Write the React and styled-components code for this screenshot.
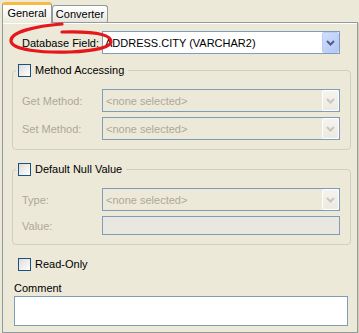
import React from 'react';
import styled, { createGlobalStyle } from 'styled-components';

const GlobalStyle = createGlobalStyle`
  html, body {
    margin: 0;
    padding: 0;
    background: #ece9d8;
  }
  body {
    font-family: "Liberation Sans", Arial, sans-serif;
    font-size: 11px;
    color: #000;
  }
`;

const Window = styled.div`
  position: relative;
  width: 359px;
  height: 333px;
  padding: 0 0 0 2px;
  box-sizing: border-box;
  background: #ece9d8;
`;

const TabStrip = styled.div`
  display: flex;
  align-items: flex-end;
  height: 22px;
`;

const Tab = styled.div`
  position: relative;
  box-sizing: border-box;
  display: flex;
  align-items: center;
  justify-content: center;
  width: ${(p) => (p.$active ? 50 : 56)}px;
  height: ${(p) => (p.$active ? 21 : 17)}px;
  margin-bottom: ${(p) => (p.$active ? -1 : 0)}px;
  z-index: ${(p) => (p.$active ? 1 : 0)};
  border: 1px solid #919b9c;
  border-bottom: none;
  border-top: ${(p) => (p.$active ? '3px solid #f9b943' : '1px solid #919b9c')};
  border-radius: 3px 3px 0 0;
  background: ${(p) =>
    p.$active
      ? 'linear-gradient(#ffffff, #f6f5ef 60%, #ece9d8)'
      : 'linear-gradient(#ffffff, #f0efe9 70%, #e6e4da)'};
  padding-bottom: ${(p) => (p.$active ? 2 : 0)}px;
`;

const Panel = styled.div`
  box-sizing: border-box;
  width: 356px;
  height: 311px;
  border: 1px solid #919b9c;
  box-shadow: inset 0 1px 0 #ffffff, 1px 1px 0 #d0cebf;
  background: #ece9d8;
  padding: 8px 6px 6px 9px;
  display: flex;
  flex-direction: column;
`;

const FieldRow = styled.div`
  display: grid;
  grid-template-columns: 80px 238px;
  align-items: center;
  padding: 0 10px 0 9px;
`;

const TopRow = styled(FieldRow)`
  padding: 0 11px 0 10px;
`;

const Label = styled.span`
  color: ${(p) => (p.$disabled ? '#aca899' : '#000')};
  white-space: nowrap;
`;

const Combo = styled.div`
  box-sizing: border-box;
  height: 23px;
  display: flex;
  align-items: center;
  border: 1px solid #7f9db9;
  background: ${(p) => (p.$disabled ? '#ece9d8' : '#ffffff')};
  color: ${(p) => (p.$disabled ? '#aca899' : '#000')};
  padding-left: ${(p) => (p.$disabled ? 3 : 2)}px;
`;

const ComboText = styled.span`
  flex: 1;
  white-space: nowrap;
  overflow: hidden;
`;

const DropButton = styled.div`
  box-sizing: border-box;
  width: 17px;
  height: 21px;
  display: flex;
  align-items: center;
  justify-content: center;
  border-radius: 2px;
  border: 1px solid ${(p) => (p.$disabled ? '#ffffff' : '#b9cdfb')};
  background: ${(p) =>
    p.$disabled
      ? 'linear-gradient(#f4f3ee, #eceae2)'
      : 'linear-gradient(135deg, #d2defd, #b3c7f5)'};
`;

const TextField = styled.div`
  box-sizing: border-box;
  height: 19px;
  border: 1px solid #7f9db9;
  background: ${(p) => (p.$disabled ? '#e8e8e1' : '#ffffff')};
`;

const Group = styled.fieldset`
  margin: ${(p) => p.$top}px 0 0 0;
  padding: 12px 0 9px 0;
  min-width: 0;
  border: 1px solid #d0d0bf;
  border-radius: 4px;
  display: flex;
  flex-direction: column;
  gap: 5px;
`;

const Legend = styled.legend`
  margin-left: 3px;
  padding: 0 4px 0 2px;
  height: 14px;
  display: flex;
  align-items: center;
  gap: 4px;
  line-height: 14px;
`;

const CheckRow = styled.div`
  margin: 12px 0 0 6px;
  height: 14px;
  display: flex;
  align-items: center;
  gap: 4px;
`;

const CheckBox = styled.span`
  box-sizing: border-box;
  width: 13px;
  height: 13px;
  border: 1px solid #1c5180;
  background: linear-gradient(135deg, #dcdcd7, #ffffff);
  flex: none;
`;

const CommentLabel = styled.div`
  margin: 10px 0 0 2px;
  line-height: 14px;
`;

const CommentBox = styled.div`
  box-sizing: border-box;
  margin: 1px 3px 0 2px;
  height: 30px;
  border: 1px solid #7f9db9;
  background: #ffffff;
`;

const Annotation = styled.svg`
  position: absolute;
  left: 0;
  top: 0;
  pointer-events: none;
  z-index: 5;
`;

const Chevron = ({ disabled }) => (
  <svg width="9" height="6" viewBox="0 0 9 6">
    <path
      d="M1 1 L4.5 4.5 L8 1"
      fill="none"
      stroke={disabled ? '#c9c7ba' : '#4d6185'}
      strokeWidth="2"
    />
  </svg>
);

const ComboBox = ({ value, disabled }) => (
  <Combo $disabled={disabled}>
    <ComboText>{value}</ComboText>
    <DropButton $disabled={disabled}>
      <Chevron disabled={disabled} />
    </DropButton>
  </Combo>
);

const App = () => (
  <>
    <GlobalStyle />
    <Window>
      <TabStrip>
        <Tab $active>General</Tab>
        <Tab>Converter</Tab>
      </TabStrip>
      <Panel>
        <TopRow>
          <Label>Database Field:</Label>
          <ComboBox value="ADDRESS.CITY (VARCHAR2)" />
        </TopRow>

        <Group $top={9}>
          <Legend>
            <CheckBox />
            Method Accessing
          </Legend>
          <FieldRow>
            <Label $disabled>Get Method:</Label>
            <ComboBox value="<none selected>" disabled />
          </FieldRow>
          <FieldRow>
            <Label $disabled>Set Method:</Label>
            <ComboBox value="<none selected>" disabled />
          </FieldRow>
        </Group>

        <Group $top={12}>
          <Legend>
            <CheckBox />
            Default Null Value
          </Legend>
          <FieldRow>
            <Label $disabled>Type:</Label>
            <ComboBox value="<none selected>" disabled />
          </FieldRow>
          <FieldRow>
            <Label $disabled>Value:</Label>
            <TextField $disabled />
          </FieldRow>
        </Group>

        <CheckRow>
          <CheckBox />
          Read-Only
        </CheckRow>

        <CommentLabel>Comment</CommentLabel>
        <CommentBox />
      </Panel>

      {/* hand-drawn red mark around the database field label */}
      <Annotation width="120" height="60" viewBox="0 0 120 60">
        <path
          d="M62 24 C36 26 10 32 11 41 C12 50 42 53 70 52 C96 51 112 47 111 41 C110 34 92 31 62 32"
          fill="none"
          stroke="#e5161c"
          strokeWidth="3.2"
          strokeLinecap="round"
        />
      </Annotation>
    </Window>
  </>
);

export default App;
